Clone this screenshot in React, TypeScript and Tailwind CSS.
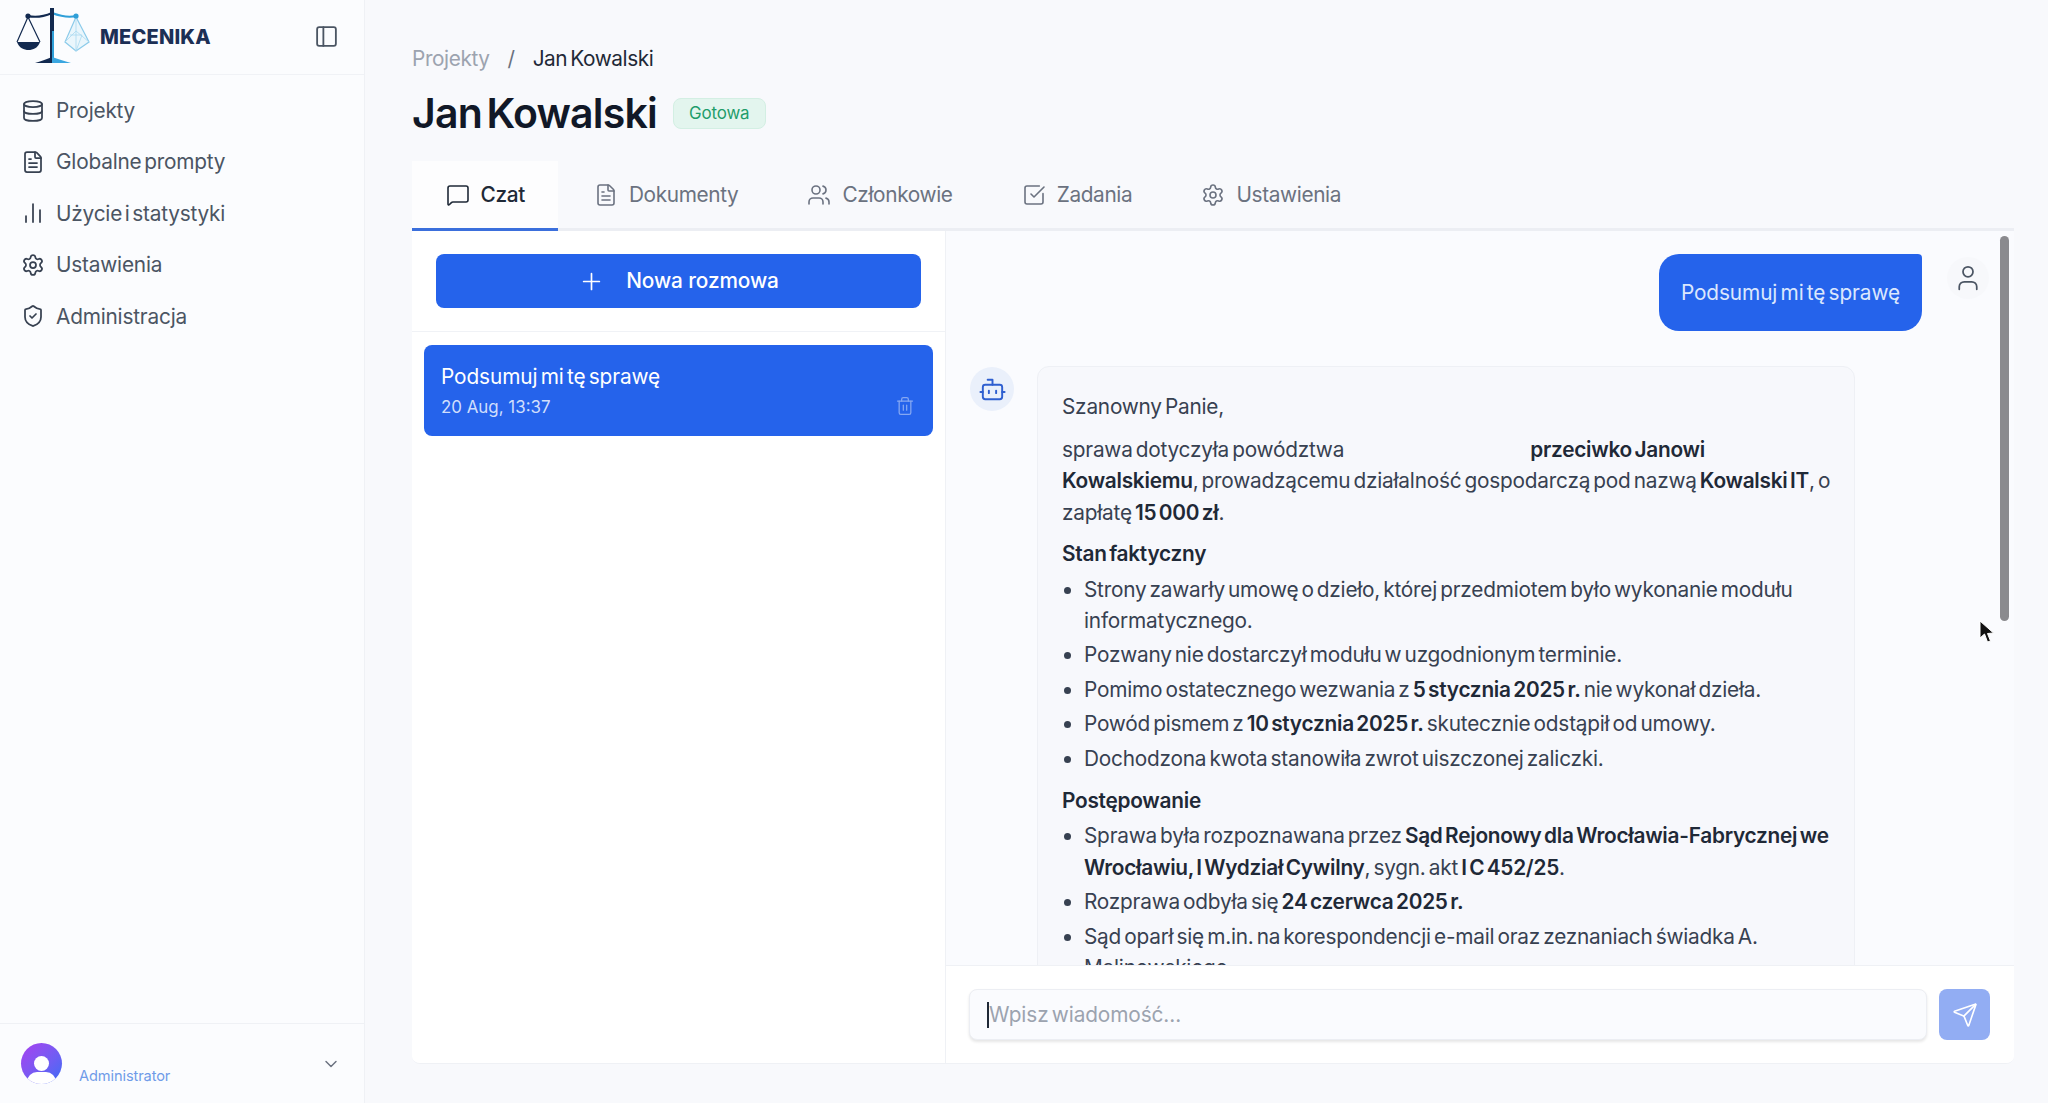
import {
  Bot,
  ChartNoAxesColumn,
  ChevronDown,
  Database,
  FileText,
  MessageSquare,
  PanelLeft,
  Plus,
  Send,
  Settings,
  ShieldCheck,
  SquareCheckBig,
  Trash2,
  User,
  Users,
} from "lucide-react";

const navItems = [
  { label: "Projekty", Icon: Database },
  { label: "Globalne prompty", Icon: FileText },
  { label: "Użycie i statystyki", Icon: ChartNoAxesColumn },
  { label: "Ustawienia", Icon: Settings },
  { label: "Administracja", Icon: ShieldCheck },
];

const tabs = [
  { label: "Czat", Icon: MessageSquare, active: true },
  { label: "Dokumenty", Icon: FileText, active: false },
  { label: "Członkowie", Icon: Users, active: false },
  { label: "Zadania", Icon: SquareCheckBig, active: false },
  { label: "Ustawienia", Icon: Settings, active: false },
];

function Logo() {
  return (
    <svg viewBox="14 4 76 62" className="w-[76px] h-[62px] shrink-0 -mt-[2px]" fill="none">
      <path d="M28 15 C36 17 45 15 52 12" stroke="#12294f" strokeWidth="2" />
      <path d="M52 12 C60 15 68 17 76 15" stroke="#2f9fd8" strokeWidth="2" />
      <rect x="50" y="7" width="4" height="52" fill="#12294f" />
      <rect x="52" y="30" width="2" height="29" fill="#2f9fd8" />
      <path d="M35 62 C42 60 47 58 52 56 L52 62 Z" fill="#12294f" />
      <path d="M52 56 C58 58 64 60 71 62 L52 62 Z" fill="#3aa6e0" />
      <path d="M28 16 L17 41 M28 16 L40 41" stroke="#12294f" strokeWidth="1.2" />
      <path d="M17 41 H40 C38 47 33 49 28.5 49 C24 49 19 47 17 41 Z" fill="#12294f" />
      <circle cx="28" cy="15" r="2.6" fill="#12294f" />
      <path d="M76 16 L65 41 L76 50 L89 41 Z" stroke="#8ccbea" strokeWidth="1.2" fill="#eaf6fc" />
      <path d="M76 16 L76 50 M65 41 L76 30 L89 41 M70 34 L82 34 L76 50" stroke="#a9d9f0" strokeWidth="0.8" />
      <circle cx="76" cy="15" r="2.6" fill="#2f9fd8" />
    </svg>
  );
}

function Sidebar() {
  return (
    <aside className="w-[365px] shrink-0 h-full flex flex-col bg-[#fbfcfe] border-r border-[#eff1f5]">
      <div className="h-[75px] shrink-0 flex items-center pl-[14px] pr-[25px] border-b border-[#f0f2f6]">
        <Logo />
        <span className="ml-[10px] text-[20px] font-extrabold tracking-[0.2px] text-[#1c2f55]">MECENIKA</span>
        <PanelLeft className="ml-auto -mt-[2px] w-[25px] h-[25px] text-[#4b5563]" strokeWidth={1.75} />
      </div>
      <nav className="flex flex-col pt-[10px] pl-[21px]">
        {navItems.map(({ label, Icon }) => (
          <div
            key={label}
            className="h-[51.4px] flex items-center gap-[11px] text-[20.8px] tracking-[-0.2px] [word-spacing:-3px] text-[#4b5563]"
          >
            <Icon className="w-[24px] h-[24px] text-[#374151]" strokeWidth={1.75} />
            <span>{label}</span>
          </div>
        ))}
      </nav>
      <div className="mt-auto h-[80px] shrink-0 border-t border-[#eff1f5] flex items-center pl-[21px] pr-[23px]">
        <div className="relative w-[41px] h-[41px] rounded-full overflow-hidden bg-gradient-to-br from-[#a63df0] to-[#2f6bf5]">
          <div className="absolute left-[13px] top-[13px] w-[15px] h-[15px] rounded-full bg-white" />
          <div className="absolute left-[6px] top-[29px] w-[29px] h-[20px] rounded-full bg-white" />
        </div>
        <span className="ml-[17px] mt-[27px] text-[14.6px] text-[#6f9be8]">Administrator</span>
        <ChevronDown className="ml-auto w-[20px] h-[20px] text-[#6b7280]" strokeWidth={1.75} />
      </div>
    </aside>
  );
}

function Conversations() {
  return (
    <div className="w-[534px] shrink-0 flex flex-col bg-white border-r border-[#eff1f5]">
      <div className="px-[24px] pt-[23px] pb-[23px] border-b border-[#f0f2f6]">
        <button className="w-full h-[54px] rounded-[8px] bg-[#2563eb] text-white text-[20.8px] font-medium flex items-center justify-center gap-[21px]">
          <Plus className="w-[27px] h-[27px]" strokeWidth={1.5} />
          Nowa rozmowa
        </button>
      </div>
      <div className="px-[12px] pt-[13px]">
        <div className="relative h-[91px] rounded-[8px] bg-[#2563eb] pl-[17px] pt-[16px] text-white">
          <div className="text-[20.8px] leading-[31px]">Podsumuj mi tę sprawę</div>
          <div className="text-[16.9px] leading-[25px] tracking-normal [word-spacing:0] text-[#cfdefc] mt-[3px]">20 Aug, 13:37</div>
          <Trash2 className="absolute right-[18px] bottom-[20px] w-[20px] h-[20px] text-[#86a8f2]" strokeWidth={1.5} />
        </div>
      </div>
    </div>
  );
}

function AiMessage() {
  const b = "font-semibold text-[#1f2937] tracking-[-0.25px]";
  return (
    <div className="flex-1 min-w-0 rounded-[12px] border border-[#eef0f5] bg-[#f7f8fc] pl-[24px] pr-[14px] pt-[24px] text-[20.8px] leading-[31.4px] tracking-[-0.22px] text-[#374151]">
      <p className="mb-[11.5px]">Szanowny Panie,</p>
      <p className="mb-[10px]">
        sprawa dotyczyła powództwa <span className="inline-block w-[183px]" />
        <strong className={b}>przeciwko Janowi Kowalskiemu</strong>, prowadzącemu działalność gospodarczą pod nazwą{" "}
        <strong className={b}>Kowalski IT</strong>, o zapłatę <strong className={b}>15 000 zł</strong>.
      </p>
      <p className={`mb-[4px] ${b}`}>Stan faktyczny</p>
      <ul className="list-disc pl-[22px] mb-[11px] flex flex-col gap-[3px]">
        <li>Strony zawarły umowę o dzieło, której przedmiotem było wykonanie modułu informatycznego.</li>
        <li>Pozwany nie dostarczył modułu w uzgodnionym terminie.</li>
        <li>
          Pomimo ostatecznego wezwania z <strong className={b}>5 stycznia 2025 r.</strong> nie wykonał dzieła.
        </li>
        <li>
          Powód pismem z <strong className={b}>10 stycznia 2025 r.</strong> skutecznie odstąpił od umowy.
        </li>
        <li>Dochodzona kwota stanowiła zwrot uiszczonej zaliczki.</li>
      </ul>
      <p className={`mb-[4px] ${b}`}>Postępowanie</p>
      <ul className="list-disc pl-[22px] flex flex-col gap-[3px]">
        <li>
          Sprawa była rozpoznawana przez{" "}
          <strong className={b}>Sąd Rejonowy dla Wrocławia-Fabrycznej we Wrocławiu, I Wydział Cywilny</strong>, sygn. akt{" "}
          <strong className={b}>I C 452/25</strong>.
        </li>
        <li>
          Rozprawa odbyła się <strong className={b}>24 czerwca 2025 r.</strong>
        </li>
        <li>Sąd oparł się m.in. na korespondencji e-mail oraz zeznaniach świadka A. Malinowskiego.</li>
      </ul>
    </div>
  );
}

function ChatPanel() {
  return (
    <div className="flex-1 min-w-0 flex flex-col bg-[#fafbfe]">
      <div className="relative flex-1 min-h-0 overflow-hidden pl-[24px] pr-[25px] pt-[23px]">
        <div className="flex justify-end gap-[25px]">
          <div className="h-[77px] px-[22px] flex items-center rounded-[20px] rounded-tr-[4px] bg-[#2563eb] text-[20.8px] text-[#dbe7fd]">
            Podsumuj mi tę sprawę
          </div>
          <div className="w-[42px] h-[42px] mt-[3px] rounded-full bg-[#f7f8fb] flex items-center justify-center">
            <User className="w-[30px] h-[30px] text-[#4b5563]" strokeWidth={1.4} />
          </div>
        </div>
        <div className="flex gap-[23px] mt-[35px] pr-[134px]">
          <div className="w-[44px] h-[44px] mt-[1px] shrink-0 rounded-full bg-[#eaf0fb] flex items-center justify-center">
            <Bot className="w-[29px] h-[29px] text-[#2f5fd0]" strokeWidth={1.6} />
          </div>
          <AiMessage />
        </div>
        {/* scrollbar thumb */}
        <div className="absolute right-[5px] top-[5px] w-[9px] h-[385px] rounded-full bg-[#8a8a8e]" />
      </div>
      <div className="h-[98px] shrink-0 bg-white border-t border-[#eff1f5] flex items-center gap-[12px] pl-[23px] pr-[24px]">
        <div className="flex-1 h-[51px] rounded-[8px] border border-[#eceef3] bg-[#fafbfe] shadow-[0_2px_3px_rgba(0,0,0,0.1)] flex items-center pl-[17px] text-[20.8px] text-[#9ca3af]">
          <span className="w-[2px] h-[26px] bg-[#1f2937]" />
          <span>Wpisz wiadomość...</span>
        </div>
        <div className="w-[51px] h-[51px] rounded-[8px] bg-[#92adf3] flex items-center justify-center">
          <Send className="w-[26px] h-[26px] text-white" strokeWidth={1.5} />
        </div>
      </div>
    </div>
  );
}

export default function App() {
  return (
    <div className="relative h-screen w-full overflow-hidden flex bg-[#f8f9fc] font-['Inter',sans-serif] tracking-[-0.1px] [word-spacing:-2.5px]">
      <Sidebar />
      <main className="flex-1 min-w-0 flex flex-col pl-[47px] pr-[34px] pb-[39px]">
        <div className="pt-[43px] flex items-center text-[20.8px] leading-[31px] tracking-[-0.4px]">
          <span className="text-[#9ca3af]">Projekty</span>
          <span className="mx-[18px] text-[#6b7280]">/</span>
          <span className="text-[#1f2937]">Jan Kowalski</span>
        </div>
        <div className="mt-[12px] flex items-center gap-[16px]">
          <h1 className="text-[41px] leading-[55px] font-semibold tracking-[-0.8px] [word-spacing:-5px] text-[#111827]">Jan Kowalski</h1>
          <span className="h-[31px] px-[15px] flex items-center rounded-[8px] bg-[#e3f5ee] border border-[#d3efe3] text-[16.9px] text-[#1f9d6b]">
            Gotowa
          </span>
        </div>
        <div className="mt-[20px] flex gap-[2px] border-b-[3px] border-[#eceef3] tracking-[-0.35px]">
          {tabs.map(({ label, Icon, active }) => (
            <div
              key={label}
              className={
                active
                  ? "h-[70px] -mb-[3px] px-[33.5px] flex items-center gap-[11px] text-[20.8px] font-medium text-[#1f2937] bg-[#fdfdfe] border-b-[3px] border-[#3b6fdc]"
                  : "h-[67px] px-[33.5px] flex items-center gap-[11px] text-[20.8px] text-[#6b7280]"
              }
            >
              <Icon className="w-[24px] h-[24px]" strokeWidth={1.6} />
              {label}
            </div>
          ))}
        </div>
        <div className="flex-1 min-h-0 flex rounded-b-[8px] overflow-hidden border-b border-[#eff1f5]">
          <Conversations />
          <ChatPanel />
        </div>
      </main>
      {/* mouse pointer from the recording */}
      <svg viewBox="0 0 16 24" className="absolute left-[1979px] top-[620px] w-[16px] h-[24px]">
        <path d="M1 1 L1 18 L5.5 14 L8.5 22 L11.5 21 L8.5 13.5 L14.5 13 Z" fill="#111" stroke="#fff" strokeWidth="1" />
      </svg>
    </div>
  );
}
